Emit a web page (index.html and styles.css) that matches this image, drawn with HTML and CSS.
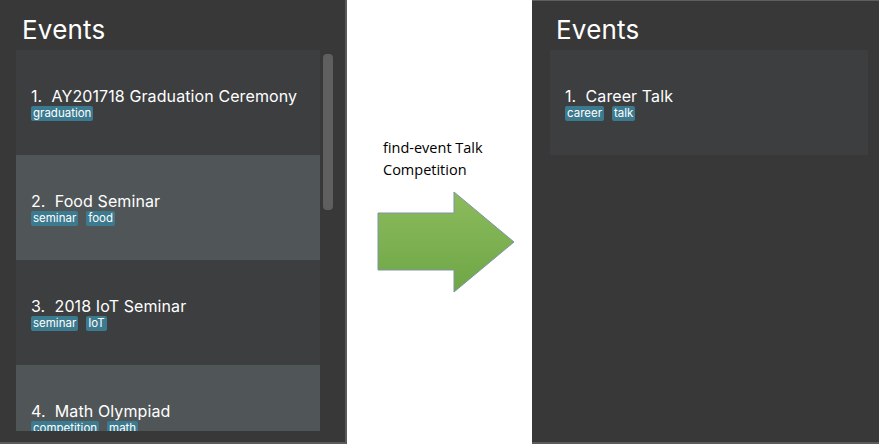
FILE: index.html
```html
<!DOCTYPE html>
<html>
<head>
<meta charset="utf-8">
<link rel="stylesheet" href="styles.css">
</head>
<body>
<div class="stage">
  <section class="panel panel-left">
    <h1 class="title">Events</h1>
    <div class="list-wrap">
      <ul class="list">
        <li class="card">
          <div class="name">1.&nbsp;&nbsp;AY201718 Graduation Ceremony</div>
          <div class="tags"><span class="tag">graduation</span></div>
        </li>
        <li class="card alt">
          <div class="name">2.&nbsp;&nbsp;Food Seminar</div>
          <div class="tags"><span class="tag">seminar</span><span class="tag">food</span></div>
        </li>
        <li class="card">
          <div class="name">3.&nbsp;&nbsp;2018 IoT Seminar</div>
          <div class="tags"><span class="tag">seminar</span><span class="tag">IoT</span></div>
        </li>
        <li class="card alt">
          <div class="name">4.&nbsp;&nbsp;Math Olympiad</div>
          <div class="tags"><span class="tag">competition</span><span class="tag">math</span></div>
        </li>
      </ul>
      <div class="scrollbar"><div class="thumb"></div></div>
    </div>
  </section>

  <section class="middle">
    <p class="command">find-event Talk<br>Competition</p>
    <svg class="arrow" width="140" height="104" viewBox="0 0 140 104">
      <defs>
        <linearGradient id="g" x1="0" y1="0" x2="0" y2="1">
          <stop offset="0" stop-color="#8cbb5c"/>
          <stop offset="1" stop-color="#6ea646"/>
        </linearGradient>
      </defs>
      <polygon points="1,22 77,22 77,1 137,51 77,101 77,79 1,79" fill="url(#g)" stroke="#7f93a8" stroke-width="1"/>
    </svg>
  </section>

  <section class="panel panel-right">
    <h1 class="title">Events</h1>
    <div class="list-wrap">
      <ul class="list">
        <li class="card">
          <div class="name">1.&nbsp;&nbsp;Career Talk</div>
          <div class="tags"><span class="tag">career</span><span class="tag">talk</span></div>
        </li>
      </ul>
    </div>
  </section>
</div>
</body>
</html>
```
FILE: styles.css
```css
* { box-sizing: border-box; }
html, body { margin: 0; padding: 0; background: #ffffff; }
body { width: 879px; height: 444px; overflow: hidden; font-family: Inter, Roboto, "Liberation Sans", sans-serif; }

.stage { display: flex; height: 444px; }

.panel {
  background: #383838;
  height: 444px;
  display: flex;
  flex-direction: column;
  padding-top: 10px;
}
.panel-left {
  width: 347px;
  border-right: 2px solid #5a5a5a;
  border-bottom: 2px solid #5a5a5a;
  padding-left: 16px;
  padding-right: 12px;
}
.panel-right {
  width: 347px;
  border-top: 1px solid #5e5e5e;
  border-bottom: 2px solid #5a5a5a;
  padding-top: 9px;
  padding-left: 18px;
  padding-right: 11px;
}

.title {
  margin: 0 0 0 6px;
  font-weight: 400;
  font-size: 26px;
  line-height: 40px;
  height: 40px;
  color: #ffffff;
  letter-spacing: 0.2px;
}

.list-wrap { display: flex; gap: 3px; }
.list {
  list-style: none;
  margin: 0;
  padding: 0;
  flex: 1;
  height: 381px;
  overflow: hidden;
}
.panel-right .list { height: auto; }

.card {
  height: 105px;
  background: #3c3e40;
  display: flex;
  flex-direction: column;
  justify-content: center;
  padding: 0 0 0 15px;
  padding-top: 1px;
}
.card.alt { background: #505658; }

.name {
  color: #ffffff;
  font-size: 16px;
  line-height: 20px;
  letter-spacing: 0.1px;
}
.tags { display: flex; gap: 8px; margin-top: 0; }
.tag {
  background: #3c7a8f;
  color: #ffffff;
  font-size: 11.5px;
  line-height: 15px;
  padding: 0 2px;
  border-radius: 2px;
}

.scrollbar { width: 10px; padding-top: 4px; }
.thumb {
  width: 10px;
  height: 156px;
  background: #5f5f5f;
  border-radius: 4px;
}

.middle {
  width: 185px;
  background: #ffffff;
  padding-left: 36px;
  padding-top: 137px;
}
.command {
  margin: 0;
  font-family: "Open Sans", Lato, sans-serif;
  font-size: 14.5px;
  line-height: 22px;
  color: #000000;
}
.arrow { display: block; margin-top: 10px; margin-left: -6px; }
```
